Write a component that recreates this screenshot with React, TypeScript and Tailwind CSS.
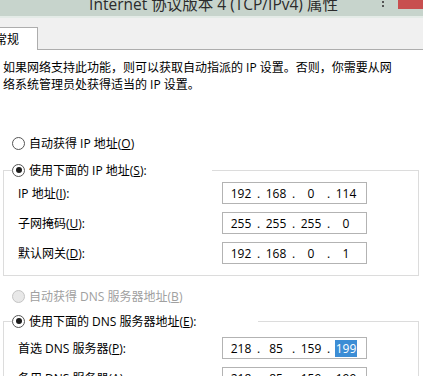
import React, { Fragment } from "react";

function Radio({ checked, disabled, children }: { checked?: boolean; disabled?: boolean; children: React.ReactNode }) {
  return (
    <div className="flex items-center h-[18px]">
      <span
        className={`w-[13px] h-[13px] rounded-full border flex items-center justify-center shrink-0 ${
          disabled ? "border-[#c4c4c4] bg-[#e8e8e8]" : "border-[#555555] bg-white"
        }`}
      >
        {checked && <span className="w-[6px] h-[6px] rounded-full bg-[#1b1b1b]" />}
      </span>
      <span className={`ml-[4px] whitespace-nowrap ${disabled ? "text-[#a0a0a0]" : "text-black"}`}>{children}</span>
    </div>
  );
}

function IPBox({ parts, hl }: { parts: string[]; hl?: boolean }) {
  return (
    <div className="w-[145px] h-[22px] border border-[#b3b3b3] bg-white flex items-center pl-[4px] shrink-0">
      {parts.map((p, i) => (
        <Fragment key={i}>
          <span className="w-[28px] flex justify-center">
            {hl && i === 3 ? <span className="bg-[#3c8dd5] text-white px-[1px]">{p}</span> : <span>{p}</span>}
          </span>
          {i < 3 && <span className="w-[7px] text-center">.</span>}
        </Fragment>
      ))}
    </div>
  );
}

function Row({ label, parts, hl }: { label: React.ReactNode; parts: string[]; hl?: boolean }) {
  return (
    <div className="flex items-center h-[22px] pl-[14px]">
      <span className="w-[204px] whitespace-nowrap">{label}</span>
      <IPBox parts={parts} hl={hl} />
    </div>
  );
}

export default function App() {
  return (
    <div className="w-[423px] h-[376px] overflow-hidden bg-white text-[12px] leading-[17px] text-black font-['Open_Sans','Noto_Sans_CJK_SC',sans-serif]">
      {/* title bar */}
      <div className="relative h-[16px] bg-[#c7d4cc] overflow-hidden flex justify-center">
        <span className="text-[15.5px] leading-[15px] mt-[-3px] ml-[4px] text-[#2b2b2b] whitespace-nowrap">
          Internet 协议版本 4 (TCP/IPv4) 属性
        </span>
        <span className="absolute left-[382px] top-[1px] w-[2px] h-[2px] bg-[#555]" />
        <span className="absolute left-[382px] top-[5px] w-[2px] h-[2px] bg-[#555]" />
        <span className="absolute left-[398px] top-0 w-[25px] h-[9px] bg-[#c84f4f]" />
      </div>
      <div className="h-[2px] bg-[#e4ebe7]" />
      {/* tab strip */}
      <div className="h-[32px] bg-[#f0f0f0] border-b border-[#adadad] flex items-end">
        <div className="w-[38px] h-[23px] -mb-px bg-white border-t border-r border-[#adadad] flex items-center overflow-hidden">
          <span className="-ml-[5px] whitespace-nowrap">常规</span>
        </div>
      </div>
      {/* content */}
      <div className="pt-[9px] pl-[3px] pr-[20px]">
        <p>如果网络支持此功能，则可以获取自动指派的 IP 设置。否则，你需要从网络系统管理员处获得适当的 IP 设置。</p>
      </div>
      <div className="mt-[41px] ml-[12px]">
        <Radio>
          自动获得 IP 地址(<u>O</u>)
        </Radio>
      </div>
      <fieldset className="mt-[9px] ml-[3px] w-[416px] border border-[#dcdcdc] px-0 pt-[3px] pb-[11px] m-0">
        <legend className="ml-[8px] w-[200px] p-0">
          <Radio checked>
            使用下面的 IP 地址(<u>S</u>):
          </Radio>
        </legend>
        <div className="flex flex-col gap-[8px]">
          <Row label={<>IP 地址(<u>I</u>):</>} parts={["192", "168", "0", "114"]} />
          <Row label={<>子网掩码(<u>U</u>):</>} parts={["255", "255", "255", "0"]} />
          <Row label={<>默认网关(<u>D</u>):</>} parts={["192", "168", "0", "1"]} />
        </div>
      </fieldset>
      <div className="mt-[11px] ml-[12px]">
        <Radio disabled>
          自动获得 DNS 服务器地址(<u>B</u>)
        </Radio>
      </div>
      <fieldset className="mt-[7px] ml-[3px] w-[416px] border border-[#dcdcdc] px-0 pt-[7px] pb-[11px] m-0">
        <legend className="ml-[8px] w-[246px] p-0">
          <Radio checked>
            使用下面的 DNS 服务器地址(<u>E</u>):
          </Radio>
        </legend>
        <div className="flex flex-col gap-[8px]">
          <Row label={<>首选 DNS 服务器(<u>P</u>):</>} parts={["218", "85", "159", "199"]} hl />
          <Row label={<>备用 DNS 服务器(<u>A</u>):</>} parts={["218", "85", "159", "199"]} />
        </div>
      </fieldset>
    </div>
  );
}
